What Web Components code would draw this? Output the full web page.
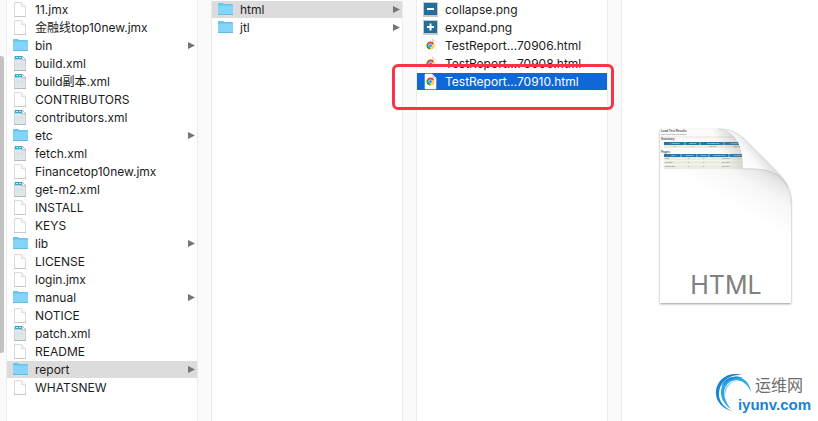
<!DOCTYPE html>
<html lang="zh-CN">
<head>
<meta charset="utf-8">
<title>report</title>
<style>
  html, body {
    height: 100%;
    margin: 0;
  }

  body {
    font: 12px/17px Inter, "Noto Sans CJK SC", sans-serif;
    color: #1c1c1c;
    background: #fff;
    overflow: hidden;
  }
</style>
</head>
<body>
<file-browser>
  <file-column label="jmeter">
    <file-row kind="blank">11.jmx</file-row>
    <file-row kind="blank">金融线top10new.jmx</file-row>
    <file-row kind="folder">bin</file-row>
    <file-row kind="xml">build.xml</file-row>
    <file-row kind="xml">build副本.xml</file-row>
    <file-row kind="blank">CONTRIBUTORS</file-row>
    <file-row kind="xml">contributors.xml</file-row>
    <file-row kind="folder">etc</file-row>
    <file-row kind="xml">fetch.xml</file-row>
    <file-row kind="blank">Financetop10new.jmx</file-row>
    <file-row kind="xml">get-m2.xml</file-row>
    <file-row kind="blank">INSTALL</file-row>
    <file-row kind="blank">KEYS</file-row>
    <file-row kind="folder">lib</file-row>
    <file-row kind="blank">LICENSE</file-row>
    <file-row kind="blank">login.jmx</file-row>
    <file-row kind="folder">manual</file-row>
    <file-row kind="blank">NOTICE</file-row>
    <file-row kind="xml">patch.xml</file-row>
    <file-row kind="blank">README</file-row>
    <file-row kind="folder" open>report</file-row>
    <file-row kind="blank">WHATSNEW</file-row>
  </file-column>
  <file-column label="report">
    <file-row kind="folder" open>html</file-row>
    <file-row kind="folder">jtl</file-row>
  </file-column>
  <file-column label="html">
    <file-row kind="minus">collapse.png</file-row>
    <file-row kind="plus">expand.png</file-row>
    <file-row kind="chrome">TestReport…70906.html</file-row>
    <file-row kind="chrome">TestReport…70908.html</file-row>
    <file-row kind="chrome" selected>TestReport…70910.html</file-row>
  </file-column>
  <file-preview></file-preview>
</file-browser>
<site-mark></site-mark>

<script>
const icons = {
  blank: `
    <path d="M2.500 1.500h7l4 4v10h-11z" fill="#fefefe" stroke="#dadada"/>
    <path d="M9.500 1.500v4h4" fill="#f6f6f6" stroke="#dfdfdf"/>
    <path d="M2 15.500h12" stroke="#c8c8c8"/>`,
  folder: `
    <path d="M1 3q0-1 1-1h4l1 1h8q1 0 1 1v9H1z" fill="#66c4ec"/>
    <path d="M1 4.500h15V13H1z" fill="#82d4f9"/>
    <path d="M1 13h15v1H1z" fill="#62bde4"/>`,
  xml: `
    <path d="M2.500 1.500h8l3 3v11h-11z" fill="#e2e7ea" stroke="#ccd0d2"/>
    <path d="M3 1h7l1 4H3z" fill="#37a5d5"/>
    <path d="M3 4h8v1H3z" fill="#a9d8ec"/>
    <path d="M4 2h2v1H4zM7 2h2v1H7z" fill="#bfe6f6"/>
    <path d="M10 1l4 4h-4z" fill="#fff" stroke="#8a8a8a" stroke-width=".5"/>
    <path d="M6 7v6M10 7v6M4 9h8" stroke="#d3dce1" stroke-width=".7"/>
    <path d="M2 15h12v1H2z" fill="#b3b8ba"/>`,
  minus: `
    <path d="M1 1h15v15H1z" fill="#c9c9c9"/>
    <path d="M2 2h13v12H2z" fill="#216f9e"/>
    <path d="M5 8h7" stroke="#fff" stroke-width="2"/>`,
  plus: `
    <path d="M1 1h15v15H1z" fill="#c9c9c9"/>
    <path d="M2 2h13v12H2z" fill="#216f9e"/>
    <path d="M5 8h7M8.500 4.500v7" stroke="#fff" stroke-width="2"/>`,
  chrome: `
    <path d="M3 1h7l4 4v11H3z" fill="#fff" stroke="#eee" stroke-width=".6"/>
    <path d="M10 1v4h4z" fill="#dedede"/>
    <circle cx="8.500" cy="8.500" r="4" fill="#ffcd40"/>
    <path d="M8.500 8.500L5 6.500a4 4 0 0 1 7 0z" fill="#dd4b3e"/>
    <path d="M8.500 8.500L5 6.500a4 4 0 0 0 3 6z" fill="#1f9d58"/>
    <circle cx="8.500" cy="8.500" r="2" fill="#fff"/>
    <circle cx="8.500" cy="8.500" r="1.500" fill="#4285f4"/>`
};

const browserTemplate = document.createElement("template");
browserTemplate.innerHTML = `
  <style>
    :host {
      display: grid;
      grid-template-columns: 7px repeat(3, 205fr) 196fr;
      height: 100vh;
    }

    .track {
      background: #fafafa;
      border-right: 1px solid #eee;
    }

    .thumb {
      width: 4px;
      height: 297px;
      margin-top: 56px;
      background: #c2c2c2;
      border-radius: 0 3px 3px 0;
    }
  </style>
  <div class="track"><div class="thumb"></div></div>
  <slot></slot>
`;

class FileBrowser extends HTMLElement {
  constructor() {
    super();
    this.attachShadow({ mode: "open" })
      .appendChild(browserTemplate.content.cloneNode(true));
  }
}

const columnTemplate = document.createElement("template");
columnTemplate.innerHTML = `
  <style>
    :host {
      display: flex;
      min-width: 0;
    }

    nav {
      flex: 1;
      min-width: 0;
      padding-top: 1px;
    }

    .gutter {
      width: 13px;
      background: #fafafa;
      border: solid #ececec;
      border-width: 0 1px;
    }
  </style>
  <nav><slot></slot></nav>
  <div class="gutter"></div>
`;

class FileColumn extends HTMLElement {
  constructor() {
    super();
    this.attachShadow({ mode: "open" })
      .appendChild(columnTemplate.content.cloneNode(true));
  }

  connectedCallback() {
    this.shadowRoot.querySelector("nav").setAttribute("aria-label", this.getAttribute("label"));
  }
}

const rowTemplate = document.createElement("template");
rowTemplate.innerHTML = `
  <style>
    :host {
      display: block;
      position: relative;
      padding-bottom: 1px;
    }

    button {
      display: flex;
      align-items: center;
      gap: 6px;
      width: 100%;
      height: 17px;
      padding: 0 2px 0 5px;
      border: 0;
      background: none;
      font: inherit;
      color: inherit;
      text-align: left;
      white-space: nowrap;
    }

    :host([open]) button {
      background: #dcdcdc;
    }

    :host([selected]) button {
      background: #0f68d6;
      color: #fff;
    }

    .icon {
      flex: none;
      width: 17px;
      height: 17px;
    }

    .name {
      flex: 1;
    }

    .arrow {
      display: none;
      width: 7px;
      height: 8px;
    }

    :host([kind="folder"]) .arrow {
      display: block;
    }

    /* red frame drawn round the picked file */
    .frame {
      display: none;
      position: absolute;
      inset: -9px -7px -19px -25px;
      border: 3px solid #fb3445;
      border-radius: 6px;
      pointer-events: none;
    }

    :host([selected]) .frame {
      display: block;
    }
  </style>
  <button type="button">
    <svg class="icon" viewBox="0 0 17 17" fill="none" aria-hidden="true"></svg>
    <span class="name"><slot></slot></span>
    <svg class="arrow" viewBox="0 0 7 8" aria-hidden="true"><path d="M0 0L7 3.500L0 7z" fill="#757575"/></svg>
  </button>
  <div class="frame"></div>
`;

class FileRow extends HTMLElement {
  constructor() {
    super();
    this.attachShadow({ mode: "open" })
      .appendChild(rowTemplate.content.cloneNode(true));
  }

  connectedCallback() {
    this.shadowRoot.querySelector(".icon").innerHTML = icons[this.getAttribute("kind")];
  }
}

const previewTemplate = document.createElement("template");
previewTemplate.innerHTML = `
  <style>
    :host {
      display: flex;
      justify-content: center;
      align-items: flex-start;
      padding: 120px 0 0 10px;
    }

    svg {
      flex: none;
      width: 150px;
      height: 190px;
    }
  </style>
  <svg viewBox="0 0 150 190" role="img" aria-label="HTML">
    <defs>
      <linearGradient id="curl" gradientUnits="userSpaceOnUse" x1="93" y1="50" x2="117" y2="30">
        <stop offset="0" stop-color="#fff"/>
        <stop offset=".45" stop-color="#fafafa"/>
        <stop offset=".8" stop-color="#dedede"/>
        <stop offset="1" stop-color="#f7f7f7"/>
      </linearGradient>
      <linearGradient id="cast" gradientUnits="userSpaceOnUse" x1="132" y1="50" x2="104" y2="98">
        <stop offset="0" stop-color="#c8c8c8"/>
        <stop offset=".25" stop-color="#e9e9e9"/>
        <stop offset=".5" stop-color="#f7f7f7"/>
        <stop offset="1" stop-color="#fff"/>
      </linearGradient>
      <linearGradient id="bend" gradientUnits="userSpaceOnUse" x1="70" y1="30" x2="94" y2="18">
        <stop offset="0" stop-color="#888" stop-opacity="0"/>
        <stop offset="1" stop-color="#777" stop-opacity=".4"/>
      </linearGradient>
      <filter id="drop" x="-10%" y="-10%" width="120%" height="120%">
        <feDropShadow dx="0" dy="1" stdDeviation="1" flood-opacity=".4"/>
      </filter>
      <clipPath id="sheet">
        <path d="M10 9H68C84 9 93 22 93 49H10z"/>
      </clipPath>
    </defs>
    <path d="M10 9H68C78 9 86 12 93 18L125 50C136 61 141 70 141 84V183H10z" fill="#fff" filter="url(#drop)"/>
    <path d="M93 48H115C130 50 141 64 141 84V140H10V48z" fill="url(#cast)"/>
    <g clip-path="url(#sheet)" font-family="Liberation Sans, sans-serif" font-size="2" fill="#555">
      <path d="M10 9h84v40H10z" fill="#fbfbfb"/>
      <text x="11" y="12" font-size="3" font-weight="bold">Load Test Results</text>
      <text x="11" y="15">Date report: date not defined</text>
      <path d="M11 17h82" stroke="#ccc" stroke-width=".5"/>
      <text x="11" y="20" font-size="3" font-weight="bold">Summary</text>
      <path d="M14 24h80v4H14zM14 37h80v12H14z" fill="#ebebe0"/>
      <path d="M14 22h80v3H14zM14 34h80v3H14z" fill="#2876a6"/>
      <path d="M14 40.500h80M14 44.500h80" stroke="#fff" stroke-width=".5"/>
      <path d="M35 21v7M50 21v7M74 21v7M31 34v15M47 34v15M59 34v15M79 34v15" stroke="#eef3f5" stroke-width=".6"/>
      <g fill="#fff">
        <text x="20" y="24"># Samples</text><text x="39" y="24">Failures</text>
        <text x="57" y="24">Success Rate</text><text x="80" y="24">Average Time</text>
        <text x="21" y="36">URL</text><text x="34" y="36"># Samples</text>
        <text x="50" y="36">Failures</text><text x="63" y="36">Success Rate</text><text x="83" y="36">Average Time</text>
      </g>
      <text x="24" y="27">3</text><text x="42" y="27">0</text><text x="59" y="27">100.00%</text><text x="84" y="27">126 ms</text>
      <text x="11" y="33" font-size="3" font-weight="bold">Pages</text>
      <text x="15" y="39">login</text><text x="38" y="39">1</text><text x="53" y="39">0</text><text x="72" y="39">100.00%</text>
      <text x="15" y="43">list page</text><text x="38" y="43">1</text><text x="53" y="43">0</text><text x="72" y="43">100.00%</text>
      <text x="15" y="47">detail page</text><text x="38" y="47">1</text><text x="53" y="47">0</text><text x="72" y="47">100.00%</text>
      <path d="M62 9h32v40H78z" fill="url(#bend)"/>
    </g>
    <path d="M68 9C78 9 86 12 93 18L125 50C131 56 135 61 138 67C130 52 117 48 93 49C94 25 84 9 68 9z" fill="url(#curl)"/>
    <path d="M68 9C78 9 86 12 93 18L125 50C136 61 141 70 141 84" fill="none" stroke="#d0d0d0" stroke-width=".8"/>
    <path d="M93 49C117 48 130 52 138 67" fill="none" stroke="#bbb" stroke-width=".6"/>
    <text x="76" y="174" text-anchor="middle" font-family="Inter, sans-serif" font-size="25" fill="#808080">HTML</text>
  </svg>
`;

class FilePreview extends HTMLElement {
  constructor() {
    super();
    this.attachShadow({ mode: "open" })
      .appendChild(previewTemplate.content.cloneNode(true));
  }
}

const markTemplate = document.createElement("template");
markTemplate.innerHTML = `
  <style>
    :host {
      position: absolute;
      right: 7px;
      bottom: 7px;
      display: grid;
      grid-template-columns: 23px auto;
    }

    svg {
      grid-area: 1 / 1;
      width: 38px;
      height: 42px;
    }

    .text {
      grid-area: 1 / 2;
      display: flex;
      flex-direction: column;
      padding-top: 4px;
    }

    .cn {
      padding-left: 17px;
      font: 16px/19px "Liberation Sans", "Noto Sans CJK SC", sans-serif;
      color: #6c6c6c;
    }

    .en {
      font: bold 15px/19px "Liberation Sans", sans-serif;
      color: #1b83d0;
    }
  </style>
  <svg viewBox="0 0 38 42" aria-hidden="true">
    <path d="M19 40C7 37 0 29 1 19C2 8 13 -1 27 3C14 2 5 10 4 20C3 29 9 36 19 40z" fill="#1583cf"/>
    <path d="M16 37C4 29 3 15 12 8C21 1 34 6 36 20C31 9 23 6 15 10C7 15 7 26 16 37z" fill="#2aa6e4"/>
    <path d="M6 15C9 6 20 2 28 6C20 4 11 8 6 15z" fill="#1583cf"/>
    <path d="M10 26C7 15 15 8 24 9C16 9 10 15 10 26z" fill="#8fd0f0"/>
  </svg>
  <div class="text">
    <span class="cn">运维网</span>
    <span class="en">iyunv.com</span>
  </div>
`;

class SiteMark extends HTMLElement {
  constructor() {
    super();
    this.attachShadow({ mode: "open" })
      .appendChild(markTemplate.content.cloneNode(true));
  }
}

customElements.define("file-browser", FileBrowser);
customElements.define("file-column", FileColumn);
customElements.define("file-row", FileRow);
customElements.define("file-preview", FilePreview);
customElements.define("site-mark", SiteMark);
</script>
</body>
</html>
